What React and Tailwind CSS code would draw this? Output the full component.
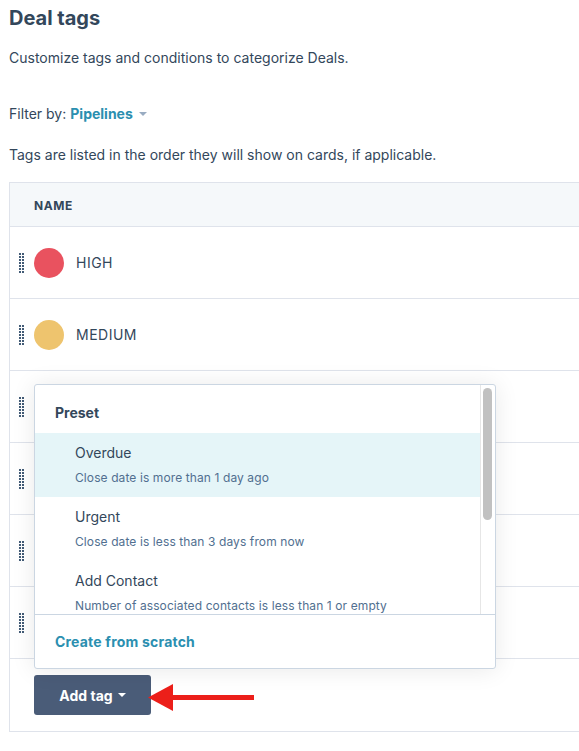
import React from "react";

const FONT = { fontFamily: '"Inter", "Liberation Sans", sans-serif' };

function DragHandle() {
  const dots = [];
  for (let r = 0; r < 7; r++) {
    for (let c = 0; c < 2; c++) {
      dots.push(<rect key={`${r}-${c}`} x={c * 3} y={r * 3} width="2" height="2" fill="#425b76" />);
    }
  }
  return (
    <svg width="5" height="20" viewBox="0 0 5 20" className="shrink-0">
      {dots}
    </svg>
  );
}

function Row({ color, label }) {
  return (
    <div className="h-[72px] border-b border-[#dfe3eb] flex items-center pl-[9px]">
      <DragHandle />
      {color ? (
        <>
          <div className="w-[30px] h-[30px] rounded-full ml-[10px] shrink-0" style={{ background: color }} />
          <span className="ml-[12px] text-[14px] tracking-[0.5px] text-[#33475b]">{label}</span>
        </>
      ) : null}
    </div>
  );
}

function Item({ title, desc, active }) {
  return (
    <div className={`pl-[40px] pt-[10px] pb-[10px] ${active ? "bg-[#e5f5f8]" : ""}`}>
      <div className="text-[14px] leading-[20px] text-[#33475b]">{title}</div>
      <div className="mt-[6px] text-[12px] leading-[18px] tracking-[0.1px] text-[#516f90]">{desc}</div>
    </div>
  );
}

export default function App() {
  return (
    <div className="w-[579px] h-[751px] overflow-hidden bg-white text-[#33475b]" style={FONT}>
      <div className="pl-[9px]">
        <h1 className="mt-[4px] text-[20px] leading-[28px] font-bold text-[#33475b]">Deal tags</h1>
        <p className="mt-[16px] text-[14px] leading-[20px]">Customize tags and conditions to categorize Deals.</p>
        <div className="mt-[36px] text-[14px] leading-[20px] flex items-center">
          <span>Filter by:</span>
          <span className="ml-[4px] font-bold text-[#2b8fb0]">Pipelines</span>
          <svg width="8" height="4" viewBox="0 0 8 4" className="ml-[6px]">
            <polygon points="0,0 8,0 4,4" fill="#99acc2" />
          </svg>
        </div>
        <p className="mt-[21px] text-[14px] leading-[20px]">Tags are listed in the order they will show on cards, if applicable.</p>

        <div className="relative mt-[17px] w-[640px] border-t border-l border-b border-[#dfe3eb]">
          <div className="h-[44px] bg-[#f5f8fa] border-b border-[#dfe3eb] flex items-center pl-[24px] pt-[3px]">
            <span className="text-[12px] font-bold tracking-[0.6px] text-[#33475b]">NAME</span>
          </div>
          <Row color="#e9525f" label="HIGH" />
          <Row color="#eec46e" label="MEDIUM" />
          <Row />
          <Row />
          <Row />
          <Row />
          <div className="relative h-[72px] pl-[24px] pt-[16px]">
            <button className="h-[40px] w-[117px] rounded-[3px] bg-[#4a5c78] text-white text-[14px] font-bold flex items-center justify-center gap-[5px]">
              Add tag
              <svg width="8" height="4" viewBox="0 0 8 4">
                <polygon points="0,0 8,0 4,4" fill="#ffffff" />
              </svg>
            </button>
            <svg width="108" height="28" viewBox="0 0 108 28" className="absolute left-[137px] top-[25px]">
              <polygon points="1,13.5 26,0 26,27" fill="#ec1f1a" />
              <rect x="24" y="11" width="83" height="5" fill="#ec1f1a" />
            </svg>
          </div>

          {/* Dropdown */}
          <div className="absolute left-[24px] top-[201px] w-[462px] h-[285px] bg-white border border-[#cbd6e2] rounded-[3px] shadow-[0_1px_24px_rgba(0,0,0,0.09)] flex flex-col overflow-hidden">
            <div className="relative h-[229px] overflow-hidden flex">
              <div className="flex-1">
                <div className="pl-[20px] pt-[18px] pb-[10px] text-[14px] leading-[20px] font-bold text-[#33475b]">Preset</div>
                <Item active title="Overdue" desc="Close date is more than 1 day ago" />
                <Item title="Urgent" desc="Close date is less than 3 days from now" />
                <Item title="Add Contact" desc="Number of associated contacts is less than 1 or empty" />
              </div>
              <div className="w-[15px] shrink-0 border-l border-[#e6e6e6] pl-[2px] pt-[3px]">
                <div className="w-[9px] h-[132px] rounded-full bg-[#c1c1c1]" />
              </div>
            </div>
            <div className="flex-1 border-t border-[#cbd6e2] pl-[20px] flex items-center">
              <span className="text-[14px] font-bold tracking-[0.2px] text-[#2b8fb0]">Create from scratch</span>
            </div>
          </div>
        </div>
      </div>
    </div>
  );
}
